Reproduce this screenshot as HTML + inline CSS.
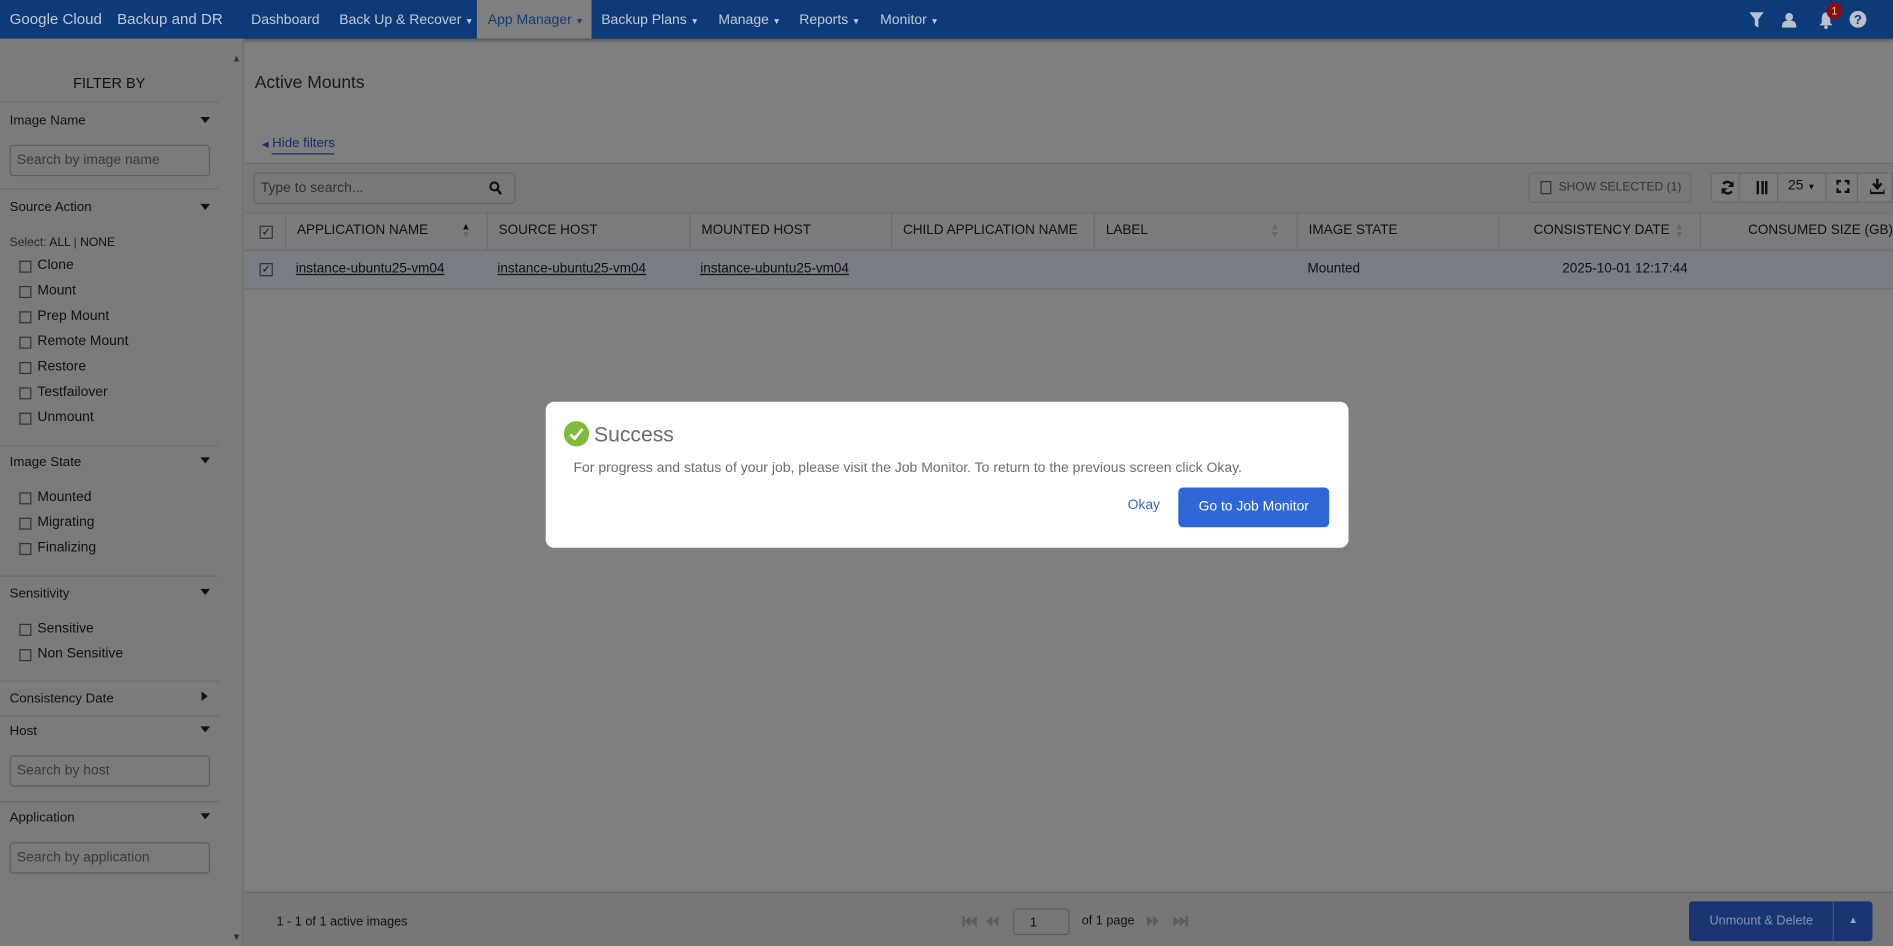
<!DOCTYPE html>
<html><head><meta charset="utf-8"><style>
*{box-sizing:border-box;margin:0;padding:0}
html,body{width:1893px;height:946px;overflow:hidden;background:#7f7f7f}
#w{position:absolute;left:0;top:0;width:1568px;height:784px;transform:scale(1.20727,1.20663);transform-origin:0 0;font-family:"Liberation Sans",Arial,sans-serif;color:#111;font-size:11.5px;background:#7f7f7f}
.a{position:absolute;white-space:nowrap}
#hd{position:absolute;left:0;top:0;width:1568px;height:32px;background:#0d3a78;color:#c2cad6;font-size:11.6px;box-shadow:0 1px 3px rgba(0,0,0,.4)}
#hd .a{top:10px}
.car{font-size:7px;margin-left:3px}
#sb{position:absolute;left:0;top:32px;width:202px;height:752px;background:#7b7b7b;border-right:1px solid #6e6e6e}
.sec{position:absolute;left:0;width:181px;border-top:1px solid #6c6c6c}
.tri{position:absolute;left:166px;width:0;height:0;border-left:4px solid transparent;border-right:4px solid transparent;border-top:5px solid #111}
.inp{position:absolute;left:8px;width:166px;height:26px;border:1px solid #5e5e5e;border-radius:3px;color:#3a3a3a;padding:6px 5px;font-size:11.5px}
.cb{position:absolute;width:10px;height:10px;border:1px solid #333;left:16px}
.lbl{position:absolute;left:31px;font-size:11.5px}
.col{position:absolute;top:176px;height:32px;border-left:1px solid #6d6d6d;padding:9px 9px;font-size:11.2px}
.ln{text-decoration:underline}
.ic{position:absolute;top:143px;height:25px;border:1px solid #6a6a6a;background:#7d7d7d}
.pg{position:absolute;top:758px}
</style></head><body><div id="w">
<div id="hd">
<div class="a" style="left:8px;font-size:12.5px;top:9px">Google Cloud</div>
<div class="a" style="left:97px;font-size:12.5px;top:9px">Backup and DR</div>
<div class="a" style="left:208px">Dashboard</div>
<div class="a" style="left:281px">Back Up &amp; Recover<span class="car">▼</span></div>
<div style="position:absolute;left:395px;top:0;width:95px;height:32px;background:#808080"></div>
<div class="a" style="left:404px;color:#173d78">App Manager<span class="car">▼</span></div>
<div class="a" style="left:498px">Backup Plans<span class="car">▼</span></div>
<div class="a" style="left:595px">Manage<span class="car">▼</span></div>
<div class="a" style="left:662px">Reports<span class="car">▼</span></div>
<div class="a" style="left:729px">Monitor<span class="car">▼</span></div>
<svg class="a" style="left:1449px;top:10px" width="12" height="13" viewBox="0 0 12 13"><path d="M0 0H12L7.5 6V13L4.5 11V6Z" fill="#b8c0cc"/></svg>
<svg class="a" style="left:1476px;top:10px" width="12" height="13" viewBox="0 0 12 13"><circle cx="6" cy="4" r="3.2" fill="#b8c0cc"/><path d="M0 13C0 8 2 7 6 7S12 8 12 13Z" fill="#b8c0cc"/></svg>
<svg class="a" style="left:1507px;top:10px" width="11" height="14" viewBox="0 0 11 14"><path d="M5.5 0C2.5 1 2 3 2 6V9L0 11H11L9 9V6C9 3 8.5 1 5.5 0Z" fill="#b8c0cc"/><circle cx="5.5" cy="12.5" r="1.5" fill="#b8c0cc"/></svg>
<div class="a" style="left:1513px;top:2px;width:13px;height:14px;border-radius:7px;background:#8a0e0e;color:#ccc;font-size:9px;text-align:center;line-height:14px">1</div>
<svg class="a" style="left:1532px;top:9px" width="14" height="14" viewBox="0 0 14 14"><circle cx="7" cy="7" r="7" fill="#b8c0cc"/><text x="7" y="11" text-anchor="middle" font-size="11" font-weight="bold" fill="#0d3a78" font-family="Liberation Sans">?</text></svg>
</div>

<div id="sb">
<div class="a" style="left:192px;top:12px;font-size:8px;color:#333">▲</div>
<div class="a" style="left:192px;top:740px;font-size:8px;color:#333">▼</div>
<div class="a" style="left:0;width:181px;top:30px;text-align:center;font-size:12px">FILTER BY</div>
<div class="sec" style="top:52px"></div>
<div class="a" style="left:8px;top:62px;font-size:11px">Image Name</div><div class="tri" style="top:65px"></div>
<div class="inp" style="top:88px">Search by image name</div>
<div class="sec" style="top:124px"></div>
<div class="a" style="left:8px;top:134px;font-size:11px">Source Action</div><div class="tri" style="top:137px"></div>
<div class="a" style="left:8px;top:164px;font-size:10px;color:#2a2a2a">Select: <span style="color:#111">ALL</span> | <span style="color:#111">NONE</span></div>
<div class="cb" style="top:184px"></div><div class="lbl" style="top:182px">Clone</div>
<div class="cb" style="top:205px"></div><div class="lbl" style="top:203px">Mount</div>
<div class="cb" style="top:226px"></div><div class="lbl" style="top:224px">Prep Mount</div>
<div class="cb" style="top:247px"></div><div class="lbl" style="top:245px">Remote Mount</div>
<div class="cb" style="top:268px"></div><div class="lbl" style="top:266px">Restore</div>
<div class="cb" style="top:289px"></div><div class="lbl" style="top:287px">Testfailover</div>
<div class="cb" style="top:310px"></div><div class="lbl" style="top:308px">Unmount</div>
<div class="sec" style="top:337px"></div>
<div class="a" style="left:8px;top:345px;font-size:11px">Image State</div><div class="tri" style="top:347px"></div>
<div class="cb" style="top:376px"></div><div class="lbl" style="top:374px">Mounted</div>
<div class="cb" style="top:397px"></div><div class="lbl" style="top:395px">Migrating</div>
<div class="cb" style="top:418px"></div><div class="lbl" style="top:416px">Finalizing</div>
<div class="sec" style="top:445px"></div>
<div class="a" style="left:8px;top:454px;font-size:11px">Sensitivity</div><div class="tri" style="top:456px"></div>
<div class="cb" style="top:485px"></div><div class="lbl" style="top:483px">Sensitive</div>
<div class="cb" style="top:506px"></div><div class="lbl" style="top:504px">Non Sensitive</div>
<div class="sec" style="top:532px"></div>
<div class="a" style="left:8px;top:541px;font-size:11px">Consistency Date</div>
<div class="a" style="left:167px;top:541px;width:0;height:0;border-top:4px solid transparent;border-bottom:4px solid transparent;border-left:5px solid #111"></div>
<div class="sec" style="top:561px"></div>
<div class="a" style="left:8px;top:568px;font-size:11px">Host</div><div class="tri" style="top:570px"></div>
<div class="inp" style="top:594px">Search by host</div>
<div class="sec" style="top:632px"></div>
<div class="a" style="left:8px;top:640px;font-size:11px">Application</div><div class="tri" style="top:642px"></div>
<div class="inp" style="top:666px">Search by application</div>
</div>

<div class="a" style="left:211px;top:61px;font-size:14.5px;color:#1a1a1a">Active Mounts</div>
<div class="a" style="left:217px;top:113px;color:#10306a;font-size:11px"><span style="font-size:7px">◀</span> <span style="border-bottom:1px solid #10306a;padding-bottom:2px">Hide filters</span></div>
<div style="position:absolute;left:203px;top:135px;width:1365px;height:41px;background:#797979;border-top:1px solid #6d6d6d"></div>
<div class="a" style="left:210px;top:143px;width:217px;height:26px;border:1px solid #666;border-radius:3px;padding:6px 5px;color:#2f2f2f">Type to search...</div>
<svg class="a" style="left:405px;top:150px" width="11" height="12" viewBox="0 0 11 12"><circle cx="4.5" cy="4.5" r="3.3" stroke="#111" stroke-width="1.8" fill="none"/><path d="M7 7L10 11" stroke="#111" stroke-width="2"/></svg>
<div class="a" style="left:1266px;top:143px;width:135px;height:25px;border:1px solid #6a6a6a;border-radius:3px;color:#333;font-size:10px;padding:6px 0 0 24px">SHOW SELECTED (1)</div>
<div class="a" style="left:1276px;top:150px;width:9px;height:11px;border:1px solid #333"></div>
<div class="ic" style="left:1417px;width:151px;border-radius:3px 0 0 3px"></div>
<svg class="a" style="left:1425px;top:149px" width="12" height="13" viewBox="0 0 12 13"><path d="M10 5A4.2 4.2 0 0 0 2.5 3.5M2 8A4.2 4.2 0 0 0 9.5 9.5" stroke="#111" stroke-width="2" fill="none"/><path d="M11 1V6H6ZM1 12V7H6Z" fill="#111"/></svg>
<div class="a" style="left:1440px;top:143px;height:25px;border-left:1px solid #6a6a6a"></div>
<div class="a" style="left:1455px;top:150px;width:9px;height:11px;border-left:2px solid #111;border-right:2px solid #111"><div style="margin-left:1.5px;width:2px;height:11px;background:#111"></div></div>
<div class="a" style="left:1472px;top:143px;height:25px;border-left:1px solid #6a6a6a"></div>
<div class="a" style="left:1481px;top:148px;font-size:11.5px">25 <span style="font-size:7px">▼</span></div>
<div class="a" style="left:1512px;top:143px;height:25px;border-left:1px solid #6a6a6a"></div>
<svg class="a" style="left:1521px;top:149px" width="11" height="11" viewBox="0 0 11 11"><path d="M1 4V1H4M7 1H10V4M10 7V10H7M4 10H1V7" stroke="#111" stroke-width="2" fill="none"/></svg>
<div class="a" style="left:1538px;top:143px;height:25px;border-left:1px solid #6a6a6a"></div>
<svg class="a" style="left:1549px;top:148px" width="12" height="13" viewBox="0 0 12 13"><path d="M6 0V7M2.5 4L6 8L9.5 4" stroke="#111" stroke-width="2" fill="none"/><path d="M0 9V12H12V9" stroke="#111" stroke-width="2" fill="none"/></svg>

<div style="position:absolute;left:203px;top:176px;width:1365px;height:32px;background:#7c7c7c;border-top:1px solid #6d6d6d;border-bottom:1px solid #6d6d6d"></div>
<div style="position:absolute;left:203px;top:208px;width:1365px;height:32px;background:#7a7d84;border-bottom:1px solid #6d6d6d"></div>
<div class="a" style="left:215px;top:187px;width:11px;height:11px;border:1px solid #333;font-size:9px;line-height:9px;text-align:center">✓</div>
<div class="a" style="left:215px;top:218px;width:11px;height:11px;border:1px solid #333;font-size:9px;line-height:9px;text-align:center">✓</div>
<div class="col" style="left:236px;width:167px">APPLICATION NAME<span style="position:absolute;left:145px;top:8px;font-size:8px;line-height:7px">▲<br><span style="color:#666">▼</span></span></div>
<div class="col" style="left:403px">SOURCE HOST</div>
<div class="col" style="left:571px">MOUNTED HOST</div>
<div class="col" style="left:738px">CHILD APPLICATION NAME</div>
<div class="col" style="left:906px;width:168px">LABEL<span style="position:absolute;left:145px;top:8px;font-size:8px;line-height:7px;color:#666">▲<br>▼</span></div>
<div class="col" style="left:1074px">IMAGE STATE</div>
<div class="col" style="left:1241px;width:167px;text-align:right;padding-right:25px">CONSISTENCY DATE<span style="position:absolute;left:145px;top:8px;font-size:8px;line-height:7px;color:#666">▲<br>▼</span></div>
<div class="col" style="left:1408px;width:160px;text-align:right;padding-right:0">CONSUMED SIZE (GB)</div>
<div class="a ln" style="left:245px;top:217px;font-size:11.2px">instance-ubuntu25-vm04</div>
<div class="a ln" style="left:412px;top:217px;font-size:11.2px">instance-ubuntu25-vm04</div>
<div class="a ln" style="left:580px;top:217px;font-size:11.2px">instance-ubuntu25-vm04</div>
<div class="a" style="left:1083px;top:217px;font-size:11.2px">Mounted</div>
<div class="a" style="left:1294px;top:217px;font-size:11.2px">2025-10-01 12:17:44</div>

<div style="position:absolute;left:203px;top:739px;width:1365px;height:45px;background:#777;border-top:1px solid #666"></div>
<div class="a" style="left:229px;top:758px;font-size:10.5px">1 - 1 of 1 active images</div>
<svg class="a" style="left:797px;top:759px" width="34" height="9" viewBox="0 0 34 9"><g fill="#5d5d5d"><rect x="0" y="0" width="2" height="9"/><path d="M7 0V9L2 4.5ZM12 0V9L7 4.5Z"/><path d="M25 0V9L20 4.5ZM30 0V9L25 4.5Z"/></g></svg>
<div class="a" style="left:839px;top:753px;width:47px;height:22px;border:1px solid #5e5e5e;border-radius:3px;padding:5px 13px;font-size:11px">1</div>
<div class="a" style="left:896px;top:757px;font-size:10.5px">of 1 page</div>
<svg class="a" style="left:950px;top:759px" width="34" height="9" viewBox="0 0 34 9"><g fill="#5d5d5d"><path d="M0 0V9L5 4.5ZM5 0V9L10 4.5Z"/><path d="M22 0V9L27 4.5ZM27 0V9L32 4.5Z"/><rect x="32" y="0" width="2" height="9"/></g></svg>
<div class="a" style="left:1399px;top:747px;width:152px;height:33px;background:#1a3571;border-radius:3px"></div>
<div class="a" style="left:1518px;top:747px;height:33px;border-left:1px solid #3d5488"></div>
<div class="a" style="left:1416px;top:757px;color:#8795b2;font-size:10.5px">Unmount &amp; Delete</div>
<div class="a" style="left:1531px;top:758px;color:#9aa6bf;font-size:8px">▲</div>

<div class="a" style="left:452px;top:333px;width:665px;height:121px;background:#fff;border-radius:7px"></div>
<svg class="a" style="left:467px;top:349px" width="21" height="21" viewBox="0 0 21 21"><circle cx="10.5" cy="10.5" r="10.5" fill="#7cbc3a"/><path d="M5.5 11L9 14.5L15.5 6.5" stroke="#fff" stroke-width="2.3" fill="none"/></svg>
<div class="a" style="left:492px;top:350px;font-size:17.5px;color:#6b6b6b">Success</div>
<div class="a" style="left:475px;top:381px;font-size:11.6px;color:#6e6e6e">For progress and status of your job, please visit the Job Monitor. To return to the previous screen click Okay.</div>
<div class="a" style="left:934px;top:413px;font-size:11.5px;color:#3b63d1">Okay</div>
<div class="a" style="left:976px;top:404px;width:125px;height:33px;background:#2f66d8;border-radius:4px;color:#fff;font-size:11.5px;text-align:center;line-height:33px">Go to Job Monitor</div>
</div></body></html>
